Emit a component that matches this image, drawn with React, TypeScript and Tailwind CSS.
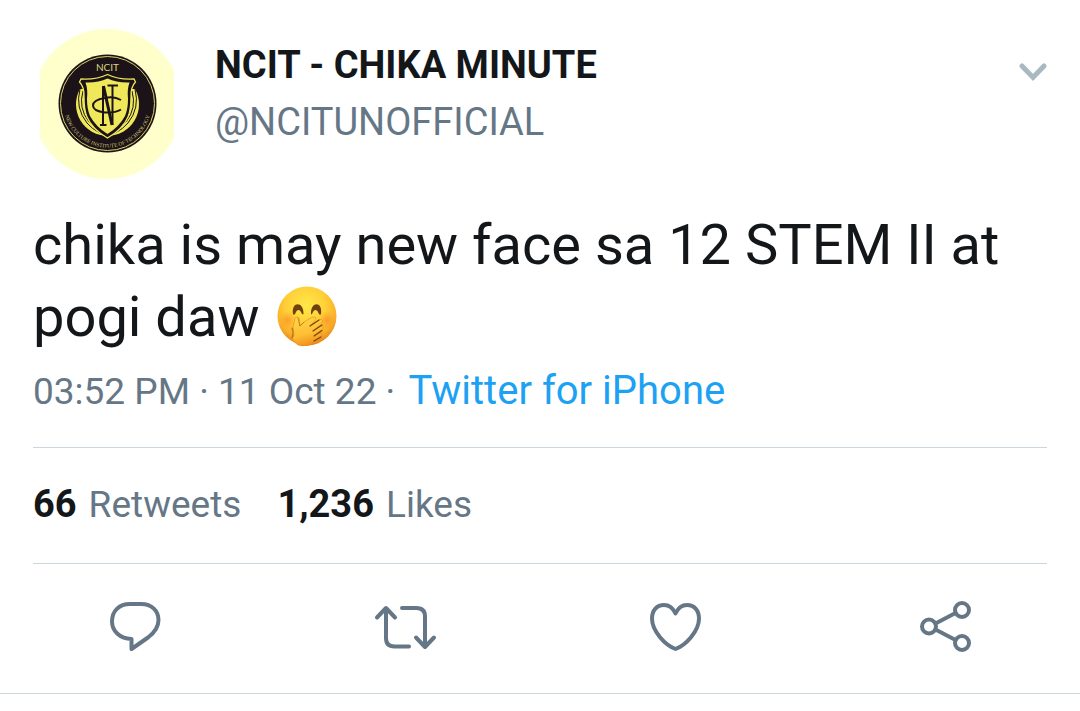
import React from "react";

function Avatar() {
  return (
    <svg viewBox="0 0 134 150" className="h-[150px] w-[134px] shrink-0" role="img" aria-label="NCIT seal">
      <defs>
        <path id="seal-bottom" d="M23.5 74.5 A44 44 0 0 0 111.5 74.5" />
      </defs>
      <circle cx="67" cy="75" r="75" fill="#ffffcc" />
      <circle cx="67.5" cy="74.5" r="49" fill="#1c1319" />
      <circle cx="67.5" cy="74.5" r="47" fill="none" stroke="#ddd268" strokeWidth="1" />
      <text fill="#cfc673" fontSize="5.4" fontFamily="'Liberation Serif', serif" textAnchor="middle">
        <textPath href="#seal-bottom" startOffset="50%">NEW CULTURE INSTITUTE OF TECHNOLOGY</textPath>
      </text>
      <path d="M40 60 H95 A31.5 31.5 0 1 1 40 60 Z" fill="#eee85a" />
      <g fill="none" stroke="#1c1319" strokeWidth="1">
        <path d="M40 60 Q35 79 47 94 Q52 100 60 104" />
        <path d="M43 62 Q38 79 49 93 Q53 98 60 101" />
        <path d="M95 60 Q100 79 88 94 Q83 100 75 104" />
        <path d="M92 62 Q97 79 86 93 Q82 98 75 101" />
      </g>
      <text fill="#ddd47c" fontSize="10" fontFamily="Lato, sans-serif" textAnchor="middle" x="67.5" y="42">NCIT</text>
      <path d="M67.5 45.5 Q79 51 94 50 L95.5 53 Q90.5 58 91 68 Q91 81 88 88 Q83 100 67.5 109 Q52 100 47 88 Q44 81 44 68 Q44.5 58 39.5 53 L41 50 Q56 51 67.5 45.5 Z" fill="#1c1319" stroke="#eee85a" strokeWidth="1.3" />
      <path d="M67.5 49.5 Q77 54 89.5 53.5 Q87 60 88 70 Q88 80 85 87 Q79 98 67.5 105 Q56 98 50 87 Q47 80 47 70 Q48 60 45.5 53.5 Q58 54 67.5 49.5 Z" fill="#eee85a" />
      <g fill="none" stroke="#1c1319">
        <path d="M63 96 V57 M72.5 96 V56" strokeWidth="2" />
        <path d="M63.5 57 L72 96" strokeWidth="3" />
        <path d="M67.5 56.5 H78 M60 96 H66.5" strokeWidth="2" />
        <path d="M81 71 Q74 67 65 69 Q53 71 53 76.5 Q53 82 65 83.5 Q75 84 81 80.5" strokeWidth="2" />
      </g>
    </svg>
  );
}

function GiggleEmoji() {
  return (
    <svg viewBox="0 0 60 60" className="ml-1 inline-block h-[60px] w-[60px] align-[-10px]" role="img" aria-label="Face with hand over mouth">
      <defs>
        <radialGradient id="face" cx="48%" cy="32%" r="68%">
          <stop offset="0" stopColor="#ffe848" />
          <stop offset="0.5" stopColor="#ffcf38" />
          <stop offset="0.8" stopColor="#f9ae29" />
          <stop offset="1" stopColor="#e5841a" />
        </radialGradient>
        <radialGradient id="blush">
          <stop offset="0" stopColor="#fb7628" stopOpacity="0.5" />
          <stop offset="1" stopColor="#fb8a28" stopOpacity="0" />
        </radialGradient>
        <linearGradient id="hand" x1="0" y1="0" x2="0.3" y2="1">
          <stop offset="0" stopColor="#ffd849" />
          <stop offset="0.65" stopColor="#fdbf35" />
          <stop offset="1" stopColor="#f2941d" />
        </linearGradient>
      </defs>
      <circle cx="30" cy="30" r="29.5" fill="url(#face)" />
      <circle cx="11" cy="34" r="9" fill="url(#blush)" />
      <circle cx="50" cy="34" r="9" fill="url(#blush)" />
      <g fill="#6d4210">
        <path d="M16 28 C14 15 27 15 26.5 28 C26 29 25 28 24.5 27 C23 23 20 23 18.5 27 C18 29 16.5 29 16 28 Z" />
        <path d="M34 28 C33.5 15 46 15 44 28 C43.5 29 42 29 41.5 27 C40 23 37 23 35.5 27 C35 28 34.5 29 34 28 Z" />
      </g>
      <path d="M17 50 C17 45 15 42 17 37 C18 34 17 31 20 31 C22.5 31 23 34 22.5 40 C27 36 34 31 37 31 C40 31 39 34 37 36 L33 40 L42 34 C45 32 47 35 44.5 37.5 L37 44 L44 40 C46.5 39 47 42 45 43.5 L38 49 L42 47 C45 46 46 49 43.5 50.5 C38 53 36 59 29 60 C21 61 18 57 15 52 Z" fill="url(#hand)" stroke="#e18a1a" strokeWidth="0.6" />
      <g fill="none" stroke="#7c430b" strokeWidth="1.2" strokeLinecap="round">
        <path d="M33 40 L42 34 M36 45 L45 39 M37 50 L45 44.5 M37 55 L44 51" />
        <path d="M21 32 L23 40 L27 36" stroke="#bd7118" strokeWidth="0.8" />
        <path d="M15 42 Q17 47 15 52" stroke="#bd7118" />
      </g>
    </svg>
  );
}

const iconProps = {
  fill: "none",
  stroke: "#657786",
  strokeWidth: 4,
  strokeLinecap: "round" as const,
  strokeLinejoin: "round" as const,
  "aria-hidden": true,
};

const actions = [
  {
    label: "Reply",
    icon: (
      <svg viewBox="0 0 64 56" className="h-[56px] w-[64px]" {...iconProps}>
        <path d="M27 5 H38 C49 5 55.5 12 55.5 21 C55.5 29 51 34 45 38.5 L28.5 50 V40 C17 40 9 32 9 22.5 C9 12 16 5 27 5 Z" />
      </svg>
    ),
  },
  {
    label: "Retweet",
    icon: (
      <svg viewBox="0 0 64 56" className="h-[56px] w-[64px]" {...iconProps}>
        <path d="M4 18.5 L13 9 L22 18.5 M13 10 V39 Q13 47.5 21.5 47.5 H36" />
        <path d="M29 9 H43.5 Q52 9 52 17.5 V47 M43 38.5 L52 48 L61 38.5" />
      </svg>
    ),
  },
  {
    label: "Like",
    icon: (
      <svg viewBox="0 0 64 56" className="h-[56px] w-[64px]" {...iconProps}>
        <path d="M32.5 14.5 C35 9 39.5 6 44 6 C51 6 56 11 56 19.5 C56 32 43 46 32.5 50 C22 46 9 32 9 19.5 C9 11 14 6 21 6 C25.5 6 30 9 32.5 14.5 Z" />
      </svg>
    ),
  },
  {
    label: "Share",
    icon: (
      <svg viewBox="0 0 64 56" className="h-[56px] w-[64px]" {...iconProps}>
        <circle cx="16" cy="27.5" r="7" />
        <circle cx="49" cy="11" r="7" />
        <circle cx="49" cy="44" r="7" />
        <path d="M22.5 24.5 L42.5 14 M22.5 30.5 L42.5 41" />
      </svg>
    ),
  },
];

export default function App() {
  return (
    <main className="bg-white font-['Roboto',sans-serif] text-[#14171a]">
      <article className="border-b border-[#ccd6dd] pt-[29px]">
        <div className="px-[33px]">
          <header className="flex items-start pl-[7px]">
            <Avatar />
            <div className="ml-[41px] flex-1 pt-2 text-[38px] leading-[57px]">
              <h1 className="font-bold">NCIT - CHIKA MINUTE</h1>
              <p className="text-[#657786]">@NCITUNOFFICIAL</p>
            </div>
            <button type="button" aria-label="More options" className="mt-[31px]">
              <svg viewBox="0 0 28 24" className="h-[24px] w-[28px]" fill="none" stroke="#aab8c2" strokeWidth="5" strokeLinecap="round" aria-hidden="true">
                <path d="M3 6 L14 17.5 L25 6" />
              </svg>
            </button>
          </header>
          <p className="mt-[30px] text-[56px] leading-[72px]">
            chika is may new face sa 12 STEM II at pogi daw <GiggleEmoji />
          </p>
          <p className="mt-[9px] text-[37px] leading-[57px] text-[#657786]">
            03:52 PM · 11 Oct 22 ·{" "}
            <a href="#source" className="ml-1 text-[40px] text-[#1da1f2]">Twitter for iPhone</a>
          </p>
          <div className="mt-[27px] flex gap-9 border-y border-[#ccd6dd] pt-7 pb-[30px] text-[37px] leading-[57px] text-[#657786]">
            <p className="flex gap-3"><strong className="text-[38px] font-bold text-[#14171a]">66</strong> Retweets</p>
            <p className="flex gap-3"><strong className="text-[38px] font-bold text-[#14171a]">1,236</strong> Likes</p>
          </div>
        </div>
        <div className="grid grid-cols-4 justify-items-center pt-[35px] pb-[38px]">
          {actions.map((action) => (
            <button key={action.label} type="button" aria-label={action.label}>
              {action.icon}
            </button>
          ))}
        </div>
      </article>
    </main>
  );
}
